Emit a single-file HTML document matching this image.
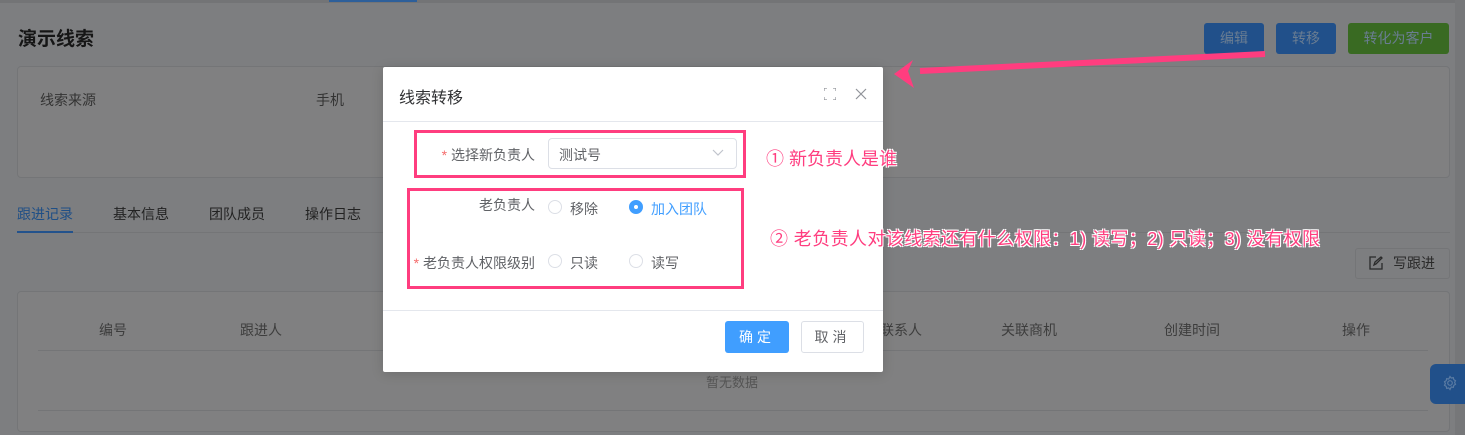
<!DOCTYPE html>
<html><head><meta charset="utf-8">
<style>
*{box-sizing:border-box;margin:0;padding:0}
body{width:1465px;height:435px;overflow:hidden;background:#7d7e80;font-family:"Liberation Sans","Noto Sans CJK SC",sans-serif;position:relative;font-size:14px;color:#2a2a2a}
.a{position:absolute}
.card{position:absolute;background:#808081;border:1px solid #747577;border-radius:4px}
.btn{position:absolute;border-radius:3px;color:#6a7d92;font-size:14px;text-align:center;line-height:31px}
.hd{position:absolute;top:320px;font-size:14px;color:#3d3d3d}
.modal{position:absolute;left:383px;top:67px;width:500px;height:305px;background:#fff;border-radius:2px;box-shadow:0 2px 12px rgba(0,0,0,.15)}
.lbl{position:absolute;font-size:14px;color:#606266;text-align:right}
.radio{position:absolute;width:14px;height:14px;border:1px solid #dcdfe6;border-radius:50%;background:#fff}
.rt{position:absolute;font-size:14px;color:#606266}
.ann{position:absolute;color:#ff3d7f;font-size:18px;white-space:nowrap;text-shadow:0 0 1px #fff,1px 1px 0 #fff,-1px -1px 0 #fff,1px -1px 0 #fff,-1px 1px 0 #fff}
</style></head><body>
<div class="a" style="left:0;top:0;width:1465px;height:3px;background:#737476"></div>
<div class="a" style="left:329px;top:0;width:88px;height:2px;background:#2d5f9a"></div>
<div class="a" style="left:1455px;top:0;width:10px;height:435px;background:#767779"></div>
<div class="a" style="left:18px;top:24px;font-size:19px;font-weight:bold;color:#161616">演示线索</div>
<div class="btn" style="left:1204px;top:23px;width:60px;background:#21508a">编辑</div>
<div class="btn" style="left:1276px;top:23px;width:60px;background:#21508a">转移</div>
<div class="btn" style="left:1348px;top:23px;width:101px;background:#396a22">转化为客户</div>
<div class="card" style="left:17px;top:66px;width:1433px;height:112px"></div>
<div class="a" style="left:40px;top:90px;font-size:14px;color:#333">线索来源</div>
<div class="a" style="left:316px;top:90px;font-size:14px;color:#333">手机</div>
<div class="a" style="left:17px;top:204px;font-size:14px;color:#1f4f86">跟进记录</div>
<div class="a" style="left:113px;top:204px;font-size:14px;color:#222">基本信息</div>
<div class="a" style="left:209px;top:204px;font-size:14px;color:#222">团队成员</div>
<div class="a" style="left:305px;top:204px;font-size:14px;color:#222">操作日志</div>
<div class="a" style="left:17px;top:232px;width:1433px;height:1px;background:#747577"></div>
<div class="a" style="left:17px;top:231px;width:56px;height:2px;background:#23528c"></div>
<div class="a" style="left:1355px;top:248px;width:95px;height:31px;border:1px solid #747577;border-radius:3px;font-size:14px;line-height:29px;color:#2a2a2a;padding-left:37px">写跟进</div>
<svg class="a" style="left:1369px;top:256px" width="14" height="14" viewBox="0 0 14 14" fill="none" stroke="#2a2a2a" stroke-width="1.3"><path d="M7 1H1v12h12V7"/><path d="M5 9l1-3 6-5 1 1-6 6z"/></svg>
<div class="card" style="left:17px;top:291px;width:1433px;height:141px"></div>
<div class="hd" style="left:99px">编号</div>
<div class="hd" style="left:240px">跟进人</div>
<div class="hd" style="left:880px">联系人</div>
<div class="hd" style="left:1001px">关联商机</div>
<div class="hd" style="left:1164px">创建时间</div>
<div class="hd" style="left:1342px">操作</div>
<div class="a" style="left:38px;top:350px;width:1390px;height:1px;background:#747577"></div>
<div class="a" style="left:38px;top:410px;width:1390px;height:1px;background:#747577"></div>
<div class="a" style="left:706px;top:372px;font-size:13px;color:#555">暂无数据</div>
<div class="a" style="left:1430px;top:364px;width:40px;height:40px;background:#21508a;border-radius:6px 0 0 6px"></div>
<svg class="a" style="left:1442px;top:375px" width="16" height="16" viewBox="0 0 16 16" fill="none" stroke="#5a7ba3" stroke-width="1.2"><circle cx="8" cy="8" r="2.3"/><path d="M8 1.5l1.3 1.6 2-.5.5 2 1.7 1.1-.9 1.8.9 1.8-1.7 1.1-.5 2-2-.5L8 14.5l-1.3-1.6-2 .5-.5-2-1.7-1.1.9-1.8-.9-1.8 1.7-1.1.5-2 2 .5z"/></svg>

<div class="modal">
 <div class="a" style="left:16px;top:17px;font-size:16px;color:#303133">线索转移</div>
 <svg class="a" style="left:441px;top:21px" width="12" height="12" viewBox="0 0 12 12" fill="none" stroke="#909399" stroke-width="1.2"><path d="M0 3V0h3M9 0h3v3M12 9v3H9M3 12H0V9"/></svg>
 <svg class="a" style="left:472px;top:21px" width="12" height="12" viewBox="0 0 12 12" stroke="#909399" stroke-width="1.2"><path d="M1 1l10 10M11 1L1 11"/></svg>
 <div class="a" style="left:0;top:54px;width:500px;height:1px;background:#e4e7ed"></div>
 <div class="a" style="left:31px;top:63px;width:332px;height:48px;border:3px solid #ff3d7f"></div>
 <div class="a" style="left:24px;top:121px;width:337px;height:101px;border:3px solid #ff3d7f"></div>
 <div class="lbl" style="left:40px;top:78px;width:112px"><span style="color:#f56c6c">* </span>选择新负责人</div>
 <div class="a" style="left:165px;top:71px;width:189px;height:31px;border:1px solid #dcdfe6;border-radius:4px;font-size:14px;color:#606266;padding:6px 0 0 10px">测试号</div>
 <svg class="a" style="left:329px;top:82px" width="12" height="8" viewBox="0 0 12 8" fill="none" stroke="#c0c4cc" stroke-width="1.2"><path d="M1 1l5 5 5-5"/></svg>
 <div class="lbl" style="left:40px;top:128px;width:112px">老负责人</div>
 <div class="radio" style="left:165px;top:133px"></div><div class="rt" style="left:187px;top:132px">移除</div>
 <div class="radio" style="left:246px;top:133px;background:#409eff;border-color:#409eff"><div style="width:4px;height:4px;background:#fff;border-radius:50%;margin:4px"></div></div><div class="rt" style="left:268px;top:132px;color:#409eff">加入团队</div>
 <div class="lbl" style="left:20px;top:186px;width:132px"><span style="color:#f56c6c">* </span>老负责人权限级别</div>
 <div class="radio" style="left:165px;top:187px"></div><div class="rt" style="left:187px;top:186px">只读</div>
 <div class="radio" style="left:246px;top:187px"></div><div class="rt" style="left:268px;top:186px">读写</div>
 <div class="a" style="left:0;top:243px;width:500px;height:1px;background:#e4e7ed"></div>
 <div class="a" style="left:342px;top:254px;width:64px;height:32px;background:#409eff;border-radius:3px;color:#fff;font-size:14px;text-align:center;line-height:32px;letter-spacing:4px">确定</div>
 <div class="a" style="left:418px;top:254px;width:63px;height:32px;border:1px solid #dcdfe6;border-radius:3px;color:#606266;font-size:14px;text-align:center;line-height:30px;letter-spacing:4px">取消</div>
</div>
<div class="ann" style="left:766px;top:145px">① 新负责人是谁</div>
<div class="ann" style="left:770px;top:225px;letter-spacing:0.4px">② 老负责人对该线索还有什么权限：1) 读写；2) 只读；3) 没有权限</div>
<svg class="a" style="left:0;top:0" width="1465" height="435"><path d="M1265 54L920 71" stroke="#ff3d7f" stroke-width="6"/><path d="M894 74L913 60 908 71 914 88z" fill="#ff3d7f"/></svg>
</body></html>
